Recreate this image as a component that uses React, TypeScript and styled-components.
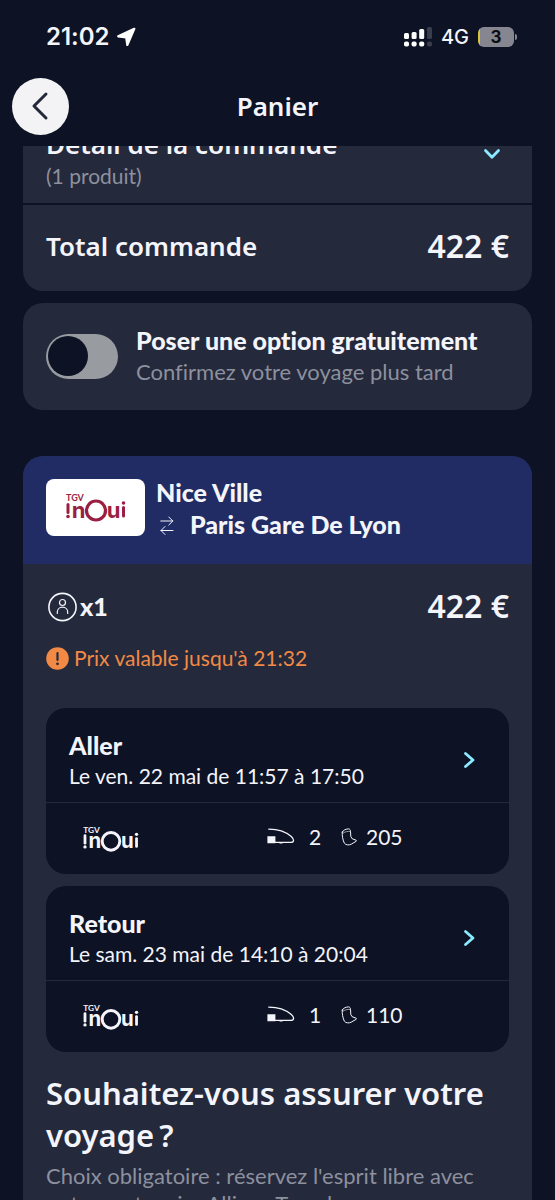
import React from "react";
import styled, { createGlobalStyle } from "styled-components";

const color = {
  page: "#0d1224",
  card: "#24293c",
  route: "#202c63",
  text: "#f4f4fb",
  muted: "#8d909d",
  accent: "#8aeaff",
  warning: "#f28a45",
  brand: "#9b1f42",
};

const titleFont = `"Noto Sans", "Open Sans", sans-serif`;
const bodyFont = `Lato, "Open Sans", sans-serif`;
const systemFont = `Inter, "Liberation Sans", sans-serif`;

const GlobalStyle = createGlobalStyle`
  *, *::before, *::after { box-sizing: border-box; }
  body {
    margin: 0;
    background: ${color.page};
    color: ${color.text};
    font-family: ${bodyFont};
    font-variant-ligatures: none;
    -webkit-font-smoothing: antialiased;
  }
  h1, h2, h3, p { margin: 0; }
  button { border: 0; padding: 0; font: inherit; color: inherit; background: none; cursor: pointer; }
  svg { display: block; flex: none; overflow: visible; }
`;

const Screen = styled.div`
  display: flex;
  flex-direction: column;
  height: 100vh;
  overflow: hidden;
`;

const StatusBar = styled.div`
  display: flex;
  align-items: center;
  justify-content: space-between;
  flex: none;
  height: 74px;
  padding: 0 38px 0 46px;
  font-family: ${systemFont};
`;

const StatusGroup = styled.div<{ $gap: number }>`
  display: flex;
  align-items: center;
  gap: ${(p) => p.$gap}px;
`;

const Clock = styled.span`
  font-size: 24px;
  font-weight: 600;
  line-height: 30px;
`;

const Network = styled.span`
  font-size: 20px;
  font-weight: 500;
  line-height: 24px;
`;

const Battery = styled.span`
  display: flex;
  align-items: center;
  justify-content: center;
  position: relative;
  width: 36px;
  height: 20px;
  margin-right: 3px;
  border-radius: 6px;
  background: linear-gradient(90deg, #d9c43a 2px, #85868f 2px);
  color: #0b0d14;
  font-size: 17px;
  font-weight: 700;
  line-height: 20px;

  &::after {
    content: "";
    position: absolute;
    right: -3px;
    top: 7px;
    width: 2px;
    height: 6px;
    border-radius: 0 2px 2px 0;
    background: #85868f;
  }
`;

const NavBar = styled.header`
  display: grid;
  grid-template-columns: 57px 1fr 57px;
  align-items: center;
  flex: none;
  height: 72px;
  padding: 0 12px 8px;
`;

const BackButton = styled.button`
  display: flex;
  align-items: center;
  justify-content: center;
  width: 57px;
  height: 57px;
  padding-right: 2px;
  border-radius: 50%;
  background: #f3f3f5;
`;

const NavTitle = styled.h1`
  font-family: ${titleFont};
  font-size: 26px;
  font-weight: 600;
  line-height: 34px;
  text-align: center;
`;

const Content = styled.main`
  flex: 1;
  min-height: 0;
  overflow: hidden;
  padding: 0 23px;
`;

const Card = styled.section<{ $flatTop?: boolean; $space?: number }>`
  margin-bottom: ${(p) => p.$space ?? 0}px;
  border-radius: ${(p) => (p.$flatTop ? "0 0 20px 20px" : "20px")};
  background: ${color.card};
  overflow: hidden;
`;

const DetailRow = styled.button`
  display: flex;
  align-items: flex-end;
  justify-content: space-between;
  width: 100%;
  height: 57px;
  padding: 0 32px 12px 23px;
  overflow: hidden;
  text-align: left;
`;

const ChevronSlot = styled.span`
  padding-bottom: 32px;
`;

const Stack = styled.span`
  display: flex;
  flex-direction: column;
  min-width: 0;
`;

const SectionTitle = styled.span`
  font-family: ${titleFont};
  font-size: 26px;
  font-weight: 600;
  line-height: 34px;
`;

const Strong = styled.span`
  font-size: 25px;
  font-weight: 900;
  line-height: 32px;
`;

const Text = styled.span<{ $tone?: "muted" | "warning" }>`
  color: ${(p) => (p.$tone ? color[p.$tone] : color.text)};
  font-size: 22px;
  line-height: 32px;
`;

const Detail = styled(Text)`
  font-size: 21px;
  line-height: 30px;
`;

const Paragraph = styled.p`
  color: ${color.muted};
  font-size: 22px;
  line-height: 28px;
`;

const Price = styled.span`
  font-family: ${titleFont};
  font-size: 32px;
  font-weight: 600;
  line-height: 40px;
  white-space: nowrap;
`;

const TotalRow = styled.div`
  display: flex;
  align-items: center;
  justify-content: space-between;
  height: 88px;
  padding: 0 23px 4px;
  border-top: 2px solid ${color.page};
`;

const OptionRow = styled.label`
  display: flex;
  align-items: center;
  gap: 18px;
  height: 107px;
  padding: 0 23px 2px;
`;

const Toggle = styled.input`
  appearance: none;
  position: relative;
  flex: none;
  width: 72px;
  height: 45px;
  margin: 2px 0 0;
  border-radius: 23px;
  background: #989b9f;
  cursor: pointer;

  &::before {
    content: "";
    position: absolute;
    top: 2px;
    left: 2px;
    width: 40px;
    height: 40px;
    border-radius: 50%;
    background: ${color.page};
  }

  &:checked::before {
    left: 30px;
  }
`;

const RouteHeader = styled.header`
  display: flex;
  align-items: flex-start;
  gap: 11px;
  height: 108px;
  padding: 20px 23px;
  background: ${color.route};
`;

const LogoTile = styled.span`
  display: flex;
  align-items: center;
  justify-content: center;
  flex: none;
  width: 99px;
  height: 57px;
  margin-top: 3px;
  border-radius: 8px;
  background: #fff;
`;

const Destination = styled.span`
  display: flex;
  align-items: center;
  gap: 16px;
  padding-left: 4px;
`;

const TripBody = styled.div`
  padding: 22px 23px;
`;

const SummaryRow = styled.div`
  display: flex;
  align-items: center;
  justify-content: space-between;
  height: 40px;
`;

const Passengers = styled.span`
  display: flex;
  align-items: center;
  gap: 3px;
  padding: 2px;
`;

const Notice = styled.p`
  display: flex;
  align-items: center;
  gap: 5px;
  margin: 17px 0 35px;
`;

const Segment = styled.article`
  margin-bottom: 12px;
  border-radius: 20px;
  background: ${color.page};
  overflow: hidden;
`;

const SegmentHead = styled.button`
  display: flex;
  align-items: center;
  justify-content: space-between;
  width: 100%;
  height: 95px;
  padding: 9px 34px 0 23px;
  border-bottom: 1px solid ${color.card};
  text-align: left;
`;

const SegmentFoot = styled.div`
  display: grid;
  grid-template-columns: 221px 1fr;
  align-items: center;
  height: 71px;
`;

const Carrier = styled.span`
  padding-left: 37px;
`;

const Placement = styled.span`
  display: flex;
  align-items: center;
  padding-bottom: 4px;
`;

const CoachNumber = styled(Detail)`
  width: 32px;
  margin-left: 14px;
`;

const SeatNumber = styled(Detail)`
  margin-left: 9px;
`;

const Question = styled.h2`
  margin: 20px 0 6px;
  font-family: ${titleFont};
  font-size: 31px;
  font-weight: 600;
  line-height: 42px;
`;

const LocationArrow = () => (
  <svg width="20" height="20" viewBox="0 0 20 20" aria-hidden="true">
    <path d="M18.300 1.800 2.200 9.300 10.200 10.300 11.300 18Z" fill="#fff" stroke="#fff" strokeWidth="2.200" strokeLinejoin="round" />
  </svg>
);

const bars = [
  { x: 0, y: 6, h: 6 },
  { x: 7.6, y: 5, h: 7 },
  { x: 15.2, y: 2, h: 10 },
  { x: 23, y: 0, h: 12, dim: true },
];

const Signal = () => (
  <svg width="28" height="20" viewBox="0 0 28 20" aria-label="Signal">
    {bars.map((b) => (
      <g key={b.x} fill={b.dim ? "#3a3e4c" : "#fff"}>
        <rect x={b.x} y={b.y} width="5" height={b.h} rx="1.500" />
        <rect x={b.x} y="14.500" width="5" height="5" rx="1.800" />
      </g>
    ))}
  </svg>
);

const Chevron = ({ direction }: { direction: "down" | "right" }) => (
  <svg
    width={direction === "down" ? 16 : 11}
    height={direction === "down" ? 10 : 16}
    viewBox={direction === "down" ? "0 0 16 10" : "0 0 11 16"}
    fill="none"
    stroke={color.accent}
    strokeWidth="2.800"
    strokeLinecap="round"
    strokeLinejoin="round"
    aria-hidden="true"
  >
    <path d={direction === "down" ? "M1.500 1.500 8 8.200l6.500-6.700" : "M1.500 1.500 9 8l-7.500 6.500"} />
  </svg>
);

const BackIcon = () => (
  <svg width="16" height="28" viewBox="0 0 16 28" fill="none" stroke="#23283a" strokeWidth="3" strokeLinecap="round" strokeLinejoin="round" aria-hidden="true">
    <path d="M14 2 2 14l12 12" />
  </svg>
);

const InouiLogo = ({ tint, width }: { tint: string; width: number }) => (
  <svg width={width} height={Math.round((width * 28) / 60)} viewBox="0 0 60 28" role="img" aria-label="TGV inOui" fill={tint}>
    <text x="0" y="7" fontFamily="Lato, sans-serif" fontSize="9" fontWeight="700">TGV</text>
    <path d="M2 10.500v8" stroke={tint} strokeWidth="3" strokeLinecap="round" />
    <circle cx="2" cy="22.500" r="1.800" />
    <text x="12.500" y="23.500" textAnchor="middle" fontFamily="Inter, sans-serif" fontSize="22" fontWeight="700">n</text>
    <circle cx="30" cy="16.500" r="9.500" fill="none" stroke={tint} strokeWidth="3.200" />
    <text x="47.500" y="23.500" textAnchor="middle" fontFamily="Inter, sans-serif" fontSize="22" fontWeight="700">u</text>
    <path d="M57.500 13.500v8.500" stroke={tint} strokeWidth="3" strokeLinecap="round" />
    <circle cx="57.500" cy="9" r="1.800" />
  </svg>
);

const SwapIcon = () => (
  <svg width="14" height="20" viewBox="0 0 14 20" fill="none" stroke={color.text} strokeWidth="1" strokeLinecap="round" strokeLinejoin="round" aria-hidden="true">
    <path d="M.8 7h12M8.800 3l4 4-4 4M13 16.500H1M5 12.500l-4 4 4 4" />
  </svg>
);

const PersonIcon = () => (
  <svg width="29" height="29" viewBox="0 0 29 29" fill="none" stroke={color.text} aria-hidden="true">
    <circle cx="14.500" cy="15" r="13.600" strokeWidth="1.600" />
    <circle cx="14.500" cy="10.500" r="3" strokeWidth="1.200" />
    <path d="M9.300 21.500v-1.300c0-3 2.200-5 5.200-5s5.200 2 5.200 5v1.300" strokeWidth="1.200" strokeLinecap="round" />
  </svg>
);

const AlertIcon = () => (
  <svg width="23" height="23" viewBox="0 0 23 23" aria-hidden="true">
    <circle cx="11.500" cy="11.500" r="11.300" fill={color.warning} />
    <path d="M11.500 6v7" stroke={color.card} strokeWidth="2.200" strokeLinecap="round" />
    <circle cx="11.500" cy="16.800" r="1.400" fill={color.card} />
  </svg>
);

const CoachIcon = () => (
  <svg width="28" height="17" viewBox="0 0 28 17" fill="none" stroke={color.text} strokeWidth="1.300" strokeLinecap="round" strokeLinejoin="round" aria-label="Voiture">
    <path d="M1.800 1.200c9 0 16.500 2.300 22.500 7.300 3.200 3 3.100 5.900-.8 5.900H7" />
    <path d="M.4 8.300h8v7H.4Z" fill={color.text} stroke="none" />
    <path d="M13 14.800h2" strokeWidth="1.600" />
  </svg>
);

const SeatIcon = () => (
  <svg width="16" height="18" viewBox="0 0 16 18" fill="none" stroke={color.text} strokeWidth="1" strokeLinecap="round" strokeLinejoin="round" aria-label="Place">
    <path d="M1.300 4C1.800 2.300 5.500.7 7.600.9c1.300.2 1.900 1.200 1.900 2.400l.3 5.200 1.300 2.200 4 1.500c.5.400.4.900-.1 1.200l-4.800 2.800c-2.200 1.100-5.400 1-6.800-1C2 13.100.7 6.500 1.300 4Z" />
    <path d="M2 5.300c1.500-1.500 4.900-2.300 7.200-1.800" strokeOpacity=".6" />
  </svg>
);

const segments = [
  { name: "Aller", schedule: "Le ven. 22 mai de 11:57 à 17:50", coach: "2", seat: "205" },
  { name: "Retour", schedule: "Le sam. 23 mai de 14:10 à 20:04", coach: "1", seat: "110" },
];

export default function App() {
  return (
    <Screen>
      <GlobalStyle />
      <StatusBar>
        <StatusGroup $gap={6}>
          <Clock>21:02</Clock>
          <LocationArrow />
        </StatusGroup>
        <StatusGroup $gap={9}>
          <Signal />
          <Network>4G</Network>
          <Battery>3</Battery>
        </StatusGroup>
      </StatusBar>
      <NavBar>
        <BackButton aria-label="Retour">
          <BackIcon />
        </BackButton>
        <NavTitle>Panier</NavTitle>
      </NavBar>

      <Content>
        <Card $flatTop $space={12}>
          <DetailRow>
            <Stack>
              <SectionTitle>Détail de la commande</SectionTitle>
              <Detail $tone="muted">(1 produit)</Detail>
            </Stack>
            <ChevronSlot>
              <Chevron direction="down" />
            </ChevronSlot>
          </DetailRow>
          <TotalRow>
            <SectionTitle>Total commande</SectionTitle>
            <Price>422 €</Price>
          </TotalRow>
        </Card>

        <Card $space={46}>
          <OptionRow>
            <Toggle type="checkbox" role="switch" />
            <Stack>
              <Strong>Poser une option gratuitement</Strong>
              <Text $tone="muted">Confirmez votre voyage plus tard</Text>
            </Stack>
          </OptionRow>
        </Card>

        <Card>
          <RouteHeader>
            <LogoTile>
              <InouiLogo tint={color.brand} width={60} />
            </LogoTile>
            <Stack>
              <Strong>Nice Ville</Strong>
              <Destination>
                <SwapIcon />
                <Strong>Paris Gare De Lyon</Strong>
              </Destination>
            </Stack>
          </RouteHeader>
          <TripBody>
            <SummaryRow>
              <Passengers>
                <PersonIcon />
                <Strong>x1</Strong>
              </Passengers>
              <Price>422 €</Price>
            </SummaryRow>
            <Notice>
              <AlertIcon />
              <Detail $tone="warning">Prix valable jusqu'à 21:32</Detail>
            </Notice>
            {segments.map((s) => (
              <Segment key={s.name}>
                <SegmentHead>
                  <Stack>
                    <Strong>{s.name}</Strong>
                    <Detail>{s.schedule}</Detail>
                  </Stack>
                  <Chevron direction="right" />
                </SegmentHead>
                <SegmentFoot>
                  <Carrier>
                    <InouiLogo tint={color.text} width={56} />
                  </Carrier>
                  <Placement>
                    <CoachIcon />
                    <CoachNumber>{s.coach}</CoachNumber>
                    <SeatIcon />
                    <SeatNumber>{s.seat}</SeatNumber>
                  </Placement>
                </SegmentFoot>
              </Segment>
            ))}
            <Question>Souhaitez-vous assurer votre voyage&#8239;?</Question>
            <Paragraph>
              Choix obligatoire : réservez l'esprit libre avec notre partenaire Allianz Travel
            </Paragraph>
          </TripBody>
        </Card>
      </Content>
    </Screen>
  );
}
